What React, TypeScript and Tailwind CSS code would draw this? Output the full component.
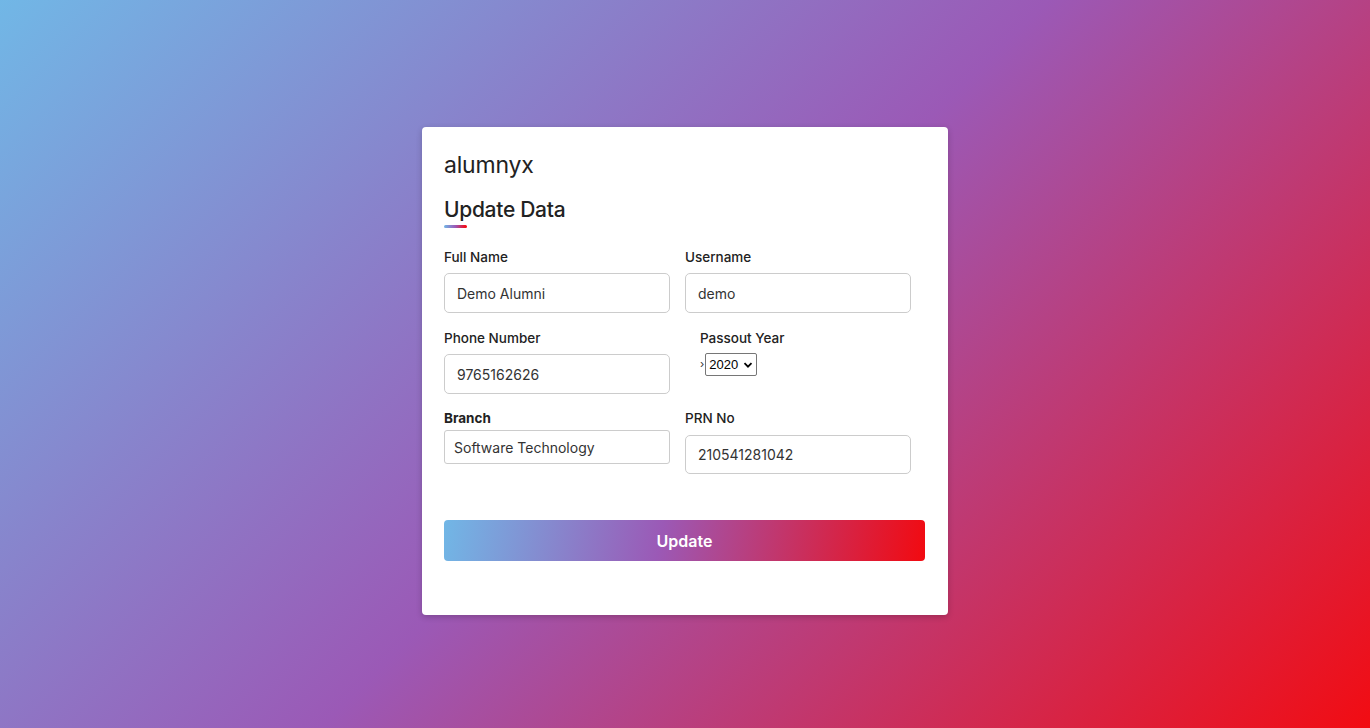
import React from "react";

const font = { fontFamily: "Inter, 'Noto Sans', sans-serif" };

export default function App() {
  return (
    <div
      className="w-full h-[728px] flex items-start justify-center bg-[linear-gradient(135deg,#71b7e6_0%,#9b59b6_50%,#f20c12_100%)]"
      style={font}
    >
      <div className="mt-[127px] w-[526px] h-[488px] bg-white rounded-[4px] shadow-[0_2px_6px_rgba(0,0,0,0.2)] pt-[21px] px-[22px] text-[#222]">
        <div className="text-[23px] leading-[34px] tracking-[-0.2px]">alumnyx</div>
        <div className="mt-[13px] text-[21px] leading-[30px] font-medium tracking-[-0.3px]">Update Data</div>
        <div className="mt-[0px] w-[23px] h-[3px] rounded-full bg-[linear-gradient(90deg,#71b7e6,#9b59b6,#f00)]" />

        <div className="mt-[20px] flex gap-[15px]">
          <div className="w-[226px]">
            <div className="text-[13.5px] leading-[18px] font-medium">Full Name</div>
            <div className="mt-[7px] h-[40px] border border-[#ccc] rounded-[5px] flex items-center pl-[12px] text-[14px] text-[#333]">Demo Alumni</div>
          </div>
          <div className="w-[226px]">
            <div className="text-[13.5px] leading-[18px] font-medium">Username</div>
            <div className="mt-[7px] h-[40px] border border-[#ccc] rounded-[5px] flex items-center pl-[12px] text-[14px] text-[#333]">demo</div>
          </div>
        </div>

        <div className="mt-[16px] flex gap-[15px]">
          <div className="w-[226px]">
            <div className="text-[13.5px] leading-[18px] font-medium">Phone Number</div>
            <div className="mt-[7px] h-[40px] border border-[#ccc] rounded-[5px] flex items-center pl-[12px] text-[14px] text-[#333]">9765162626</div>
          </div>
          <div className="w-[226px] pl-[15px]">
            <div className="text-[13.5px] leading-[18px] font-medium">Passout Year</div>
            <div className="mt-[6px] flex items-center">
              <span className="text-[11px] text-[#333] mr-[1px]">›</span>
              <div className="h-[23px] w-[52px] border border-[#767676] rounded-[2px] flex items-center justify-between pl-[3px] pr-[3px] text-[13px] text-black" style={{ fontFamily: "'Liberation Sans', Arial, sans-serif" }}>
                <span>2020</span>
                <svg width="10" height="10" viewBox="0 0 10 10"><path d="M1.5 3.2 L5 6.7 L8.5 3.2" fill="none" stroke="#000" strokeWidth="1.8" /></svg>
              </div>
            </div>
          </div>
        </div>

        <div className="mt-[15px] flex gap-[15px]">
          <div className="w-[226px]">
            <div className="text-[13.5px] leading-[18px] font-bold">Branch</div>
            <div className="mt-[3px] h-[34px] border border-[#ccc] rounded-[3px] flex items-center pl-[9px] text-[14px] text-[#333]">Software Technology</div>
          </div>
          <div className="w-[226px]">
            <div className="text-[13.5px] leading-[18px] font-medium">PRN No</div>
            <div className="mt-[8px] h-[39px] border border-[#ccc] rounded-[5px] flex items-center pl-[12px] text-[14px] text-[#333]">210541281042</div>
          </div>
        </div>

        <div className="mt-[46px] w-[481px] h-[41px] rounded-[4px] bg-[linear-gradient(100deg,#71b7e6_0%,#9b59b6_45%,#f20a10_100%)] flex items-center justify-center text-white text-[16px] font-semibold">
          Update
        </div>
      </div>
    </div>
  );
}
